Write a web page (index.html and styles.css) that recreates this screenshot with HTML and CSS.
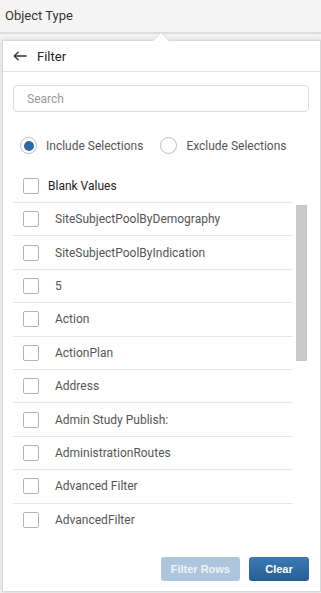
FILE: index.html
```html
<!DOCTYPE html>
<html lang="en">
<head>
  <meta charset="UTF-8">
  <meta name="viewport" content="width=device-width, initial-scale=1.0">
  <title>Object Type filter</title>
  <link rel="stylesheet" href="styles.css">
</head>
<body>
  <div class="topbar">Object Type</div>

  <div class="popover">
    <div class="pop-head">
      <svg class="back" width="14" height="10" viewBox="0 0 14 10">
        <path d="M13.5 5H1M5.5 0.8L1.2 5l4.3 4.2" fill="none" stroke="#333" stroke-width="1.3"/>
      </svg>
      <span>Filter</span>
    </div>

    <div class="pop-body">
      <input type="text" class="search" placeholder="Search">

      <div class="modes">
        <label class="mode"><span class="radio checked"></span>Include Selections</label>
        <label class="mode"><span class="radio"></span>Exclude Selections</label>
      </div>

      <label class="blank"><span class="check"></span>Blank Values</label>

      <div class="values-wrap">
        <ul class="values" id="values"></ul>
        <div class="thumb"></div>
      </div>

      <div class="actions">
        <button class="btn disabled">Filter Rows</button>
        <button class="btn">Clear</button>
      </div>
    </div>
  </div>

  <script>
    const values = [
      "SiteSubjectPoolByDemography",
      "SiteSubjectPoolByIndication",
      "5",
      "Action",
      "ActionPlan",
      "Address",
      "Admin Study Publish:",
      "AdministrationRoutes",
      "Advanced Filter",
      "AdvancedFilter"
    ];
    const list = document.getElementById('values');
    values.forEach(v => {
      const li = document.createElement('li');
      li.innerHTML = `<span class="check"></span><span class="label">${v}</span>`;
      list.appendChild(li);
    });
  </script>
</body>
</html>
```

FILE: styles.css
```css
body {
  margin: 0;
  font-family: Roboto, "Liberation Sans", Arial, sans-serif;
  background: #f3f3f3;
  height: 593px;
  overflow: hidden;
}
.topbar {
  height: 32px;
  line-height: 31px;
  padding-left: 5px;
  font-size: 13px;
  color: #333;
  background: #f4f4f4;
  border-bottom: 2px solid #dcdcdc;
}
.popover {
  position: absolute;
  left: 2px;
  right: 0;
  top: 40px;
  bottom: 1px;
  background: #fff;
  border: 1px solid #d9d9d9;
  box-shadow: 0 0 4px rgba(0, 0, 0, 0.15);
  display: flex;
  flex-direction: column;
}
/* caret pointing up to the column header */
.popover::before,
.popover::after {
  content: "";
  position: absolute;
  left: 149px;
  border: 9px solid transparent;
  border-top: 0;
}
.popover::before {
  top: -9px;
  border-bottom-color: #d9d9d9;
}
.popover::after {
  top: -8px;
  border-bottom-color: #fff;
}
.pop-head {
  height: 30px;
  display: flex;
  align-items: center;
  padding-left: 10px;
  border-bottom: 1px solid #e2e2e2;
  font-size: 13px;
  color: #222;
}
.pop-head .back {
  margin-right: 10px;
}
.pop-body {
  flex: 1;
  display: flex;
  flex-direction: column;
  padding: 13px 11px 10px 10px;
}
.search {
  box-sizing: border-box;
  width: 100%;
  height: 27px;
  margin: 0;
  padding: 0 13px;
  border: 1px solid #dcdcdc;
  border-radius: 4px;
  font-family: inherit;
  font-size: 12px;
  outline: none;
}
.search::placeholder {
  color: #9a9a9a;
}
.modes {
  display: flex;
  margin-top: 25px;
  padding-left: 7px;
  height: 17px;
}
.mode {
  display: flex;
  align-items: center;
  font-size: 12px;
  color: #555;
  margin-right: 17px;
}
.radio {
  box-sizing: border-box;
  width: 17px;
  height: 17px;
  border: 1px solid #bdbdbd;
  border-radius: 50%;
  margin-right: 9px;
  display: flex;
  align-items: center;
  justify-content: center;
}
.radio.checked::after {
  content: "";
  width: 10px;
  height: 10px;
  border-radius: 50%;
  background: #2b69a8;
}
.check {
  box-sizing: border-box;
  width: 16px;
  height: 16px;
  border: 1px solid #b3b3b3;
  border-radius: 2px;
  background: #fff;
  flex: none;
}
.blank {
  display: flex;
  align-items: center;
  height: 17px;
  margin-top: 23px;
  padding-left: 10px;
  font-size: 12px;
  color: #222;
}
.blank .check {
  margin-right: 9px;
}
.values-wrap {
  position: relative;
  margin-top: 8px;
  height: 334px;
  padding-right: 16px;
  overflow: hidden;
}
.values {
  list-style: none;
  margin: 0;
  padding: 0;
}
.values li {
  box-sizing: border-box;
  height: 33.4px;
  display: flex;
  align-items: center;
  padding-left: 10px;
  border-top: 1px solid #e6e6e6;
  font-size: 12px;
  color: #555;
}
.values li .check {
  margin-right: 16px;
}
/* scrollbar thumb */
.thumb {
  position: absolute;
  right: 2px;
  top: 3px;
  width: 11px;
  height: 156px;
  background: #c9c9c9;
}
.actions {
  margin-top: auto;
  display: flex;
  justify-content: flex-end;
  gap: 9px;
}
.btn {
  height: 24px;
  min-width: 60px;
  padding: 0 10px;
  border: none;
  border-radius: 3px;
  font-family: "Liberation Sans", Arial, sans-serif;
  font-size: 11px;
  font-weight: bold;
  color: #fff;
  background: linear-gradient(#3b7ab8, #275e94);
  cursor: pointer;
}
.btn.disabled {
  background: #aec6dd;
  color: #eef4f9;
  cursor: default;
}
```
